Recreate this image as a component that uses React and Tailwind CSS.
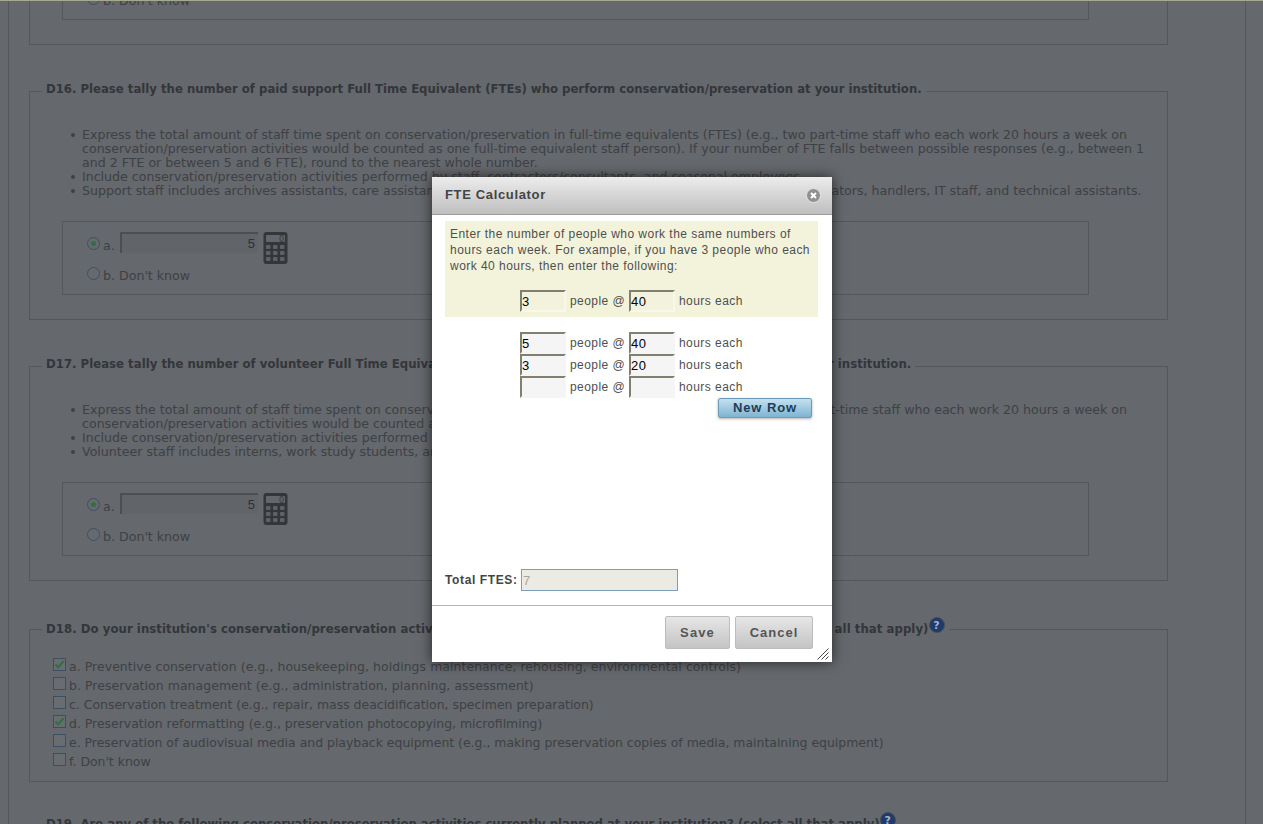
import React from "react";

const dv = "font-['DejaVu_Sans','Liberation_Sans',sans-serif]";
const lib = "font-['Liberation_Sans',Arial,sans-serif]";

function Radio({ on }) {
  return (
    <span className="w-[13px] h-[13px] shrink-0 rounded-full border border-[#3f5066] bg-[#66696d] flex items-center justify-center">
      {on && <span className="w-[5px] h-[5px] rounded-full bg-[#2f6f42]" />}
    </span>
  );
}

function Calc() {
  const keys = [];
  [13, 19, 25].forEach((y) =>
    [3, 10, 17].forEach((x) =>
      keys.push(<rect key={x + "-" + y} x={x} y={y} width="4.5" height="4" rx="1" fill="#5e6165" />)
    )
  );
  return (
    <svg width="25" height="32" viewBox="0 0 25 32" className="ml-[5px] shrink-0">
      <rect x="0.5" y="0" width="24" height="32" rx="3" fill="#33363a" />
      <rect x="3" y="3" width="19" height="7" rx="1" fill="#63666a" />
      <text x="21" y="9.5" fontSize="8" textAnchor="end" fontFamily="DejaVu Sans" fill="#33363a">0</text>
      {keys}
    </svg>
  );
}

function AnswerBox({ mt }) {
  return (
    <div className={`ml-[32px] w-[1027px] h-[74px] border border-[#54575b] pl-[24px] pt-[10px] ${mt}`}>
      <div className="flex items-start h-[32px]">
        <span className="mt-[5px]"><Radio on /></span>
        <span className="ml-[3px] mt-[7px] w-[17px] leading-[14px]">a.</span>
        <div className="w-[138px] h-[21px] border-t-2 border-l-2 border-[#4b4e52] bg-[#616468] text-right pr-[3px] pt-[2px] leading-[16px] text-[#2d3034] font-['Liberation_Sans',sans-serif] text-[13px]">5</div>
        <Calc />
      </div>
      <div className="flex items-start mt-[3px]">
        <Radio />
        <span className="ml-[3px] mt-[2px] leading-[14px]">b. Don't know</span>
      </div>
    </div>
  );
}

function Help() {
  return (
    <span className="-mt-[5px] inline-flex w-[16px] h-[16px] shrink-0 rounded-full bg-[#1f3a6c] border border-[#4a4e55] text-[#aab4c4] text-[11px] font-bold items-center justify-center leading-none">?</span>
  );
}

function Check({ on, label, wide }) {
  return (
    <div className="flex items-start h-[19px]">
      <span className="w-[13px] h-[13px] shrink-0 border border-[#3d4e62] bg-[#696c70] flex items-center justify-center">
        {on && (
          <svg width="11" height="11" viewBox="0 0 11 11">
            <path d="M1.5 5.5 L4.2 8.5 L9.5 2" fill="none" stroke="#2f7040" strokeWidth="2" />
          </svg>
        )}
      </span>
      <span className={`ml-[3px] mt-[2px] leading-[14px] text-[12.45px] ${wide ? "tracking-[0.07px]" : ""}`}>{label}</span>
    </div>
  );
}

const legendCls = "ml-[12px] px-[4px] h-[20px] pt-[1px] leading-[14px] font-bold text-[11.7px] text-[#33363a] whitespace-nowrap";

function Field({ legend, mt, children, h, legendExtra = "" }) {
  return (
    <fieldset className={`ml-[20px] w-[1139px] border border-[#54575b] ${mt} ${h}`}>
      <legend className={`${legendCls} ${legendExtra}`}>{legend}</legend>
      {children}
    </fieldset>
  );
}

function Bullets({ items }) {
  return (
    <ul className="ml-[52px] mt-[27px] w-[1070px] leading-[14px] text-[12.6px]">
      {items.map((t) => (
        <li key={t} className="relative before:absolute before:-left-[11px] before:top-[5px] before:w-[4px] before:h-[4px] before:rounded-full before:bg-[#3e4145]">{t}</li>
      ))}
    </ul>
  );
}

function Inp({ v, yellow }) {
  return (
    <input
      defaultValue={v}
      className={`w-[46px] h-[22px] border-2 border-t-[#808070] border-l-[#808070] ${yellow ? "border-r-[#f7f7ea] border-b-[#f7f7ea] bg-[#f3f3dd]" : "border-r-[#f5f5f5] border-b-[#f5f5f5] bg-[#f5f5f5]"} text-[13px] leading-[16px] text-black px-0 outline-none ${lib}`}
    />
  );
}

function CalcRow({ a, b, yellow }) {
  return (
    <div className="flex items-center justify-center h-[22px] text-[12px] text-[#4f4f4f] tracking-[0.45px]">
      <Inp v={a} yellow={yellow} />
      <span className="ml-[4px] w-[59px]">people @</span>
      <Inp v={b} yellow={yellow} />
      <span className="ml-[4px] w-[64px]">hours each</span>
    </div>
  );
}

function Modal() {
  return (
    <div className={`absolute left-[432px] top-[177px] w-[400px] h-[485px] bg-white flex flex-col shadow-[0_0_12px_rgba(0,0,0,0.65)] ${lib}`}>
      <div className="h-[38px] shrink-0 pb-[1px] bg-gradient-to-b from-[#ececec] to-[#bfbfbf] border-b border-[#9c9c9c] flex items-center justify-between pl-[13px] pr-[11px]">
        <span className="font-bold text-[13px] tracking-[0.65px] text-[#444]">FTE Calculator</span>
        <span className="w-[15px] h-[15px] rounded-full bg-[#909090] border border-[#e6e6e6] flex items-center justify-center">
          <svg width="9" height="9" viewBox="0 0 9 9"><path d="M2 2 L7 7 M7 2 L2 7" stroke="#fff" strokeWidth="2" /></svg>
        </span>
      </div>
      <div className="flex-1 flex flex-col pl-[13px] pr-[14px] pt-[6px] pb-[14px] min-h-0">
        <div className="bg-[#f3f3db] pt-[5px] pb-[5px]">
          <p className="px-[5px] text-[12px] leading-[16px] tracking-[0.46px] text-[#4f4f4f] whitespace-nowrap">
            Enter the number of people who work the same numbers of<br />
            hours each week. For example, if you have 3 people who each<br />
            work 40 hours, then enter the following:
          </p>
          <div className="mt-[16px]"><CalcRow a="3" b="40" yellow /></div>
        </div>
        <div className="mt-[15px]">
          <CalcRow a="5" b="40" />
          <CalcRow a="3" b="20" />
          <CalcRow a="" b="" />
        </div>
        <div className="flex justify-end pr-[6px]">
          <button className="w-[94px] h-[20px] pb-[2px] rounded-[2px] border border-[#6d9ab8] bg-gradient-to-b from-[#c3e0ef] to-[#7fb4d2] text-[#1d3d57] font-bold text-[13px] leading-[15px] tracking-[0.9px] shadow-[0_1px_3px_rgba(0,0,0,0.3)]">New Row</button>
        </div>
        <div className="flex-1" />
        <div className="flex items-center h-[22px]">
          <span className="font-bold text-[12px] tracking-[0.62px] text-[#444] w-[76px]">Total FTES:</span>
          <input disabled defaultValue="7" className="w-[157px] h-[22px] border border-[#7f9db9] bg-[#ebebe4] text-[13px] text-[#aca899] px-[1px]" />
        </div>
      </div>
      <div className="relative h-[57px] shrink-0 border-t border-[#b4b4b4] flex justify-end items-start pt-[10px] pr-[19px] gap-[5px]">
        <button className="w-[65px] h-[33px] rounded-[2px] border border-[#bdbdbd] bg-gradient-to-b from-[#e6e6e6] to-[#c4c4c4] text-[#555] font-bold text-[13px] tracking-[1.1px]">Save</button>
        <button className="w-[78px] h-[33px] rounded-[2px] border border-[#bdbdbd] bg-gradient-to-b from-[#e6e6e6] to-[#c4c4c4] text-[#555] font-bold text-[13px] tracking-[1px]">Cancel</button>
        <svg width="12" height="12" viewBox="0 0 12 12" className="absolute right-[3px] bottom-[2px]">
          <path d="M0.5 11.5 L11.5 0.5 M4.5 11.5 L11.5 4.5 M8.5 11.5 L11.5 8.5" stroke="#444" strokeWidth="1" />
        </svg>
      </div>
    </div>
  );
}

export default function App() {
  return (
    <div className={`relative h-[824px] w-[1263px] overflow-hidden bg-[#65686c] text-[#3e4145] text-[12.6px] ${dv}`}>
      <div className="h-px bg-[#a8a88e]" />
      <div className="ml-[8px] w-[1238px] h-[823px] border-x border-[#54575b]">
        <div className="ml-[20px] w-[1139px] h-[44px] border-x border-b border-[#54575b]">
          <div className="ml-[32px] w-[1027px] h-[19px] border-x border-b border-[#54575b] pl-[24px] overflow-hidden">
            <div className="flex items-start -mt-[9px]">
              <Radio />
              <span className="ml-[3px] mt-[2px] leading-[14px]">b. Don't know</span>
            </div>
          </div>
        </div>

        <Field mt="mt-[36px]" h="h-[239px]" legend="D16. Please tally the number of paid support Full Time Equivalent (FTEs) who perform conservation/preservation at your institution.">
          <Bullets items={[
            "Express the total amount of staff time spent on conservation/preservation in full-time equivalents (FTEs) (e.g., two part-time staff who each work 20 hours a week on conservation/preservation activities would be counted as one full-time equivalent staff person). If your number of FTE falls between possible responses (e.g., between 1 and 2 FTE or between 5 and 6 FTE), round to the nearest whole number.",
            "Include conservation/preservation activities performed by staff, contractors/consultants, and seasonal employees.",
            "Support staff includes archives assistants, care assistants, conservation technicians, laboratory helpers, exhibit preparators, handlers, IT staff, and technical assistants.",
          ]} />
          <AnswerBox mt="mt-[23px]" />
        </Field>

        <Field mt="mt-[36px]" h="h-[225px]" legendExtra="tracking-[0.025px]" legend="D17. Please tally the number of volunteer Full Time Equivalents (FTEs) who perform conservation/preservation at your institution.">
          <Bullets items={[
            "Express the total amount of staff time spent on conservation/preservation in full-time equivalents (FTEs) (e.g., two part-time staff who each work 20 hours a week on conservation/preservation activities would be counted as one full-time equivalent staff person).",
            "Include conservation/preservation activities performed by volunteers and interns.",
            "Volunteer staff includes interns, work study students, and unpaid staff at your institution.",
          ]} />
          <AnswerBox mt="mt-[23px]" />
        </Field>

        <fieldset className="ml-[20px] w-[1139px] h-[166px] mt-[35px] border border-[#54575b]">
          <legend className="ml-[12px] px-[4px] h-[26px] pt-[6px] leading-[14px] font-bold text-[11.7px] tracking-[0.06px] text-[#33363a] whitespace-nowrap flex items-start">
            <span>D18. Do your institution's conservation/preservation activities include any of the following types of activities? (select all that apply)</span><Help />
          </legend>
          <div className="ml-[23px] mt-[16px]">
            <Check on wide label="a. Preventive conservation (e.g., housekeeping, holdings maintenance, rehousing, environmental controls)" />
            <Check wide label="b. Preservation management (e.g., administration, planning, assessment)" />
            <Check label="c. Conservation treatment (e.g., repair, mass deacidification, specimen preparation)" />
            <Check on label="d. Preservation reformatting (e.g., preservation photocopying, microfilming)" />
            <Check label="e. Preservation of audiovisual media and playback equipment (e.g., making preservation copies of media, maintaining equipment)" />
            <Check label="f. Don't know" />
          </div>
        </fieldset>

        <div className="ml-[37px] mt-[35px] leading-[14px] font-bold text-[11.7px] text-[#33363a] whitespace-nowrap flex items-start">
          <span>D19. Are any of the following conservation/preservation activities currently planned at your institution? (select all that apply)</span><Help />
        </div>
      </div>
      <Modal />
    </div>
  );
}
